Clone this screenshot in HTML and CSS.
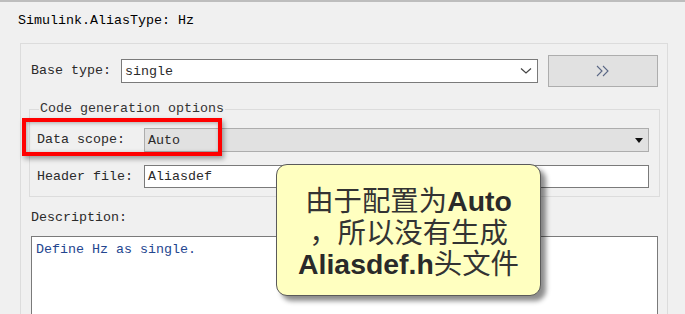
FILE: index.html
```html
<!DOCTYPE html>
<html lang="zh-CN">
<head>
  <meta charset="UTF-8">
  <meta name="viewport" content="width=device-width, initial-scale=1.0">
  <title>Simulink.AliasType: Hz</title>
  <link rel="stylesheet" href="styles.css">
</head>
<body>

  <div class="title">Simulink.AliasType: Hz</div>

  <div class="panel">
    <!-- 基本类型 -->
    <div class="base-row">
      <span class="label">Base type:</span>
      <div class="combo">
        <span>single</span>
        <svg class="chevron" width="12" height="8" viewBox="0 0 12 8"><path d="M1 1.5 L6 6 L11 1.5" fill="none" stroke="#444" stroke-width="1.2"/></svg>
      </div>
      <button class="more-btn" title="more">
        <svg width="16" height="12" viewBox="0 0 16 12"><path d="M2 1 L7 6 L2 11 M8 1 L13 6 L8 11" fill="none" stroke="#5a6785" stroke-width="1.1"/></svg>
      </button>
    </div>

    <!-- 代码生成选项 -->
    <fieldset class="codegen">
      <legend>Code generation options</legend>
      <div class="field-row">
        <span class="label">Data scope:</span>
        <div class="select">
          <span>Auto</span>
          <span class="tri"></span>
        </div>
      </div>
      <div class="field-row header-row">
        <span class="label">Header file:</span>
        <div class="input">Aliasdef</div>
      </div>
      <div class="highlight"></div>
    </fieldset>

    <div class="desc-label label">Description:</div>
    <div class="desc">Define Hz as single.</div>
  </div>

  <!-- 提示框 -->
  <div class="callout">
    由于配置为<b>Auto</b><br>
    ，所以没有生成<br>
    <b>Aliasdef.h</b>头文件
  </div>

</body>
</html>
```

FILE: styles.css
```css
body {
  margin: 0;
  background: #f0f0f0;
  border-top: 2px solid #bdbdbd;
  font-family: "Liberation Mono", "DejaVu Sans Mono", monospace;
  font-size: 13.33px;
  color: #2a2a2a;
  height: 312px;
  overflow: hidden;
  position: relative;
}
.title {
  padding: 11px 0 0 18px;
  height: 30px;
  line-height: 16px;
  color: #000;
}
.panel {
  margin-left: 20px;
  width: 648px;
  height: 280px;
  border: 1px solid #dcdcdc;
  border-bottom: none;
  padding: 11px 0 0 9px;
  box-sizing: border-box;
}
.label {
  line-height: 16px;
  white-space: nowrap;
}
.base-row {
  display: flex;
  align-items: center;
  padding-left: 1px;
  height: 32px;
}
.base-row .label {
  width: 90px;
}
.combo {
  width: 417px;
  height: 24px;
  box-sizing: border-box;
  border: 1px solid #7a7a7a;
  background: #fff;
  display: flex;
  align-items: center;
  justify-content: space-between;
  padding: 0 4px 0 3px;
}
.chevron {
  margin-right: 1px;
}
.more-btn {
  margin-left: 10px;
  width: 110px;
  height: 32px;
  border: 1px solid #adadad;
  background: #e1e1e1;
  padding: 0;
  display: flex;
  align-items: center;
  justify-content: center;
}
.codegen {
  position: relative;
  margin: 14px 0 0 -1px;
  width: 631px;
  height: 96px;
  box-sizing: border-box;
  border: 1px solid #dcdcdc;
  padding: 0 10px 0 7px;
}
.codegen legend {
  margin-left: 2px;
  padding: 0 1px;
  line-height: 16px;
  color: #333;
}
.field-row {
  display: flex;
  align-items: center;
  margin-top: 11px;
}
.field-row .label {
  width: 107px;
}
.header-row {
  margin-top: 13px;
}
.select {
  flex: 1;
  height: 24px;
  box-sizing: border-box;
  border: 1px solid #adadad;
  background: #e1e1e1;
  display: flex;
  align-items: center;
  justify-content: space-between;
  padding: 0 5px 0 3px;
}
.tri {
  width: 0;
  height: 0;
  border-left: 4px solid transparent;
  border-right: 4px solid transparent;
  border-top: 5px solid #111;
}
.input {
  flex: 1;
  height: 23px;
  line-height: 21px;
  box-sizing: border-box;
  border: 1px solid #7a7a7a;
  background: #fff;
  padding-left: 3px;
}
.highlight {
  position: absolute;
  left: -8px;
  top: 1px;
  width: 200px;
  height: 38px;
  box-sizing: border-box;
  border: 4px solid #f00;
  box-shadow: 2px 3px 5px rgba(0, 0, 0, 0.35), inset 1px 1px 4px rgba(0, 0, 0, 0.3);
}
.desc-label {
  margin-top: 13px;
  padding-left: 1px;
}
.desc {
  margin: 10px 0 0 1px;
  width: 627px;
  height: 100px;
  box-sizing: border-box;
  border: 1px solid #7a7a7a;
  background: #fff;
  padding: 5px 4px;
  line-height: 16px;
  color: #23468f;
}
.callout {
  position: absolute;
  left: 276px;
  top: 162px;
  width: 265px;
  height: 132px;
  box-sizing: border-box;
  border: 1px solid #5a5a5a;
  border-radius: 11px;
  background: #ffffc0;
  box-shadow: 5px 5px 5px rgba(0, 0, 0, 0.45);
  padding-top: 21px;
  text-align: center;
  font-family: "Liberation Sans", "Noto Sans CJK SC", sans-serif;
  font-size: 28.4px;
  line-height: 31.5px;
  color: #333;
}
.callout b {
  font-weight: bold;
  color: #2a2a2a;
}
```
